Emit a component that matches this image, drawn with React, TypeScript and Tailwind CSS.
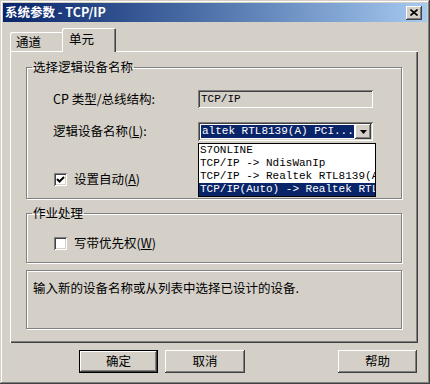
import React from "react";

const raised =
  "shadow-[inset_-1px_-1px_#404040,inset_1px_1px_#ffffff,inset_-2px_-2px_#808080,inset_2px_2px_#d4d0c8]";
const sunken =
  "shadow-[inset_1px_1px_#808080,inset_-1px_-1px_#ffffff,inset_2px_2px_#404040,inset_-2px_-2px_#d4d0c8]";
const etched = "border border-[#808080] shadow-[1px_1px_0_#ffffff,inset_1px_1px_0_#ffffff]";
const mono = "font-['Liberation_Mono',monospace] text-[11px]";

function Checkbox({ checked }: { checked?: boolean }) {
  return (
    <div className={`h-[13px] w-[13px] bg-white ${sunken} flex items-center justify-center`}>
      {checked && (
        <svg width="9" height="9" viewBox="0 0 9 9">
          <polyline points="1,4 3.5,6.5 8,2" fill="none" stroke="#000" strokeWidth="2" />
        </svg>
      )}
    </div>
  );
}

function Button({ label, primary }: { label: string; primary?: boolean }) {
  return (
    <div
      className={`flex h-[23px] items-center justify-center text-[12.5px] ${
        primary ? "border border-black" : ""
      } ${raised}`}
    >
      {label}
    </div>
  );
}

const items = [
  "S7ONLINE",
  "TCP/IP -> NdisWanIp",
  "TCP/IP -> Realtek RTL8139(A) PCI Fast Ethernet",
  "TCP/IP(Auto) -> Realtek RTL8139(A) PCI Fast Ethernet",
];

export default function App() {
  return (
    <div
      className={`h-[384px] w-[430px] bg-[#d4d0c8] p-[3px] text-black font-['Noto_Sans_CJK_SC',sans-serif] shadow-[inset_-1px_-1px_#404040,inset_1px_1px_#d4d0c8,inset_-2px_-2px_#808080,inset_2px_2px_#ffffff]`}
    >
      {/* title bar */}
      <div className="flex h-[19px] items-center bg-gradient-to-r from-[#0a246a] to-[#a6caf0] pl-[2px]">
        <span className="text-[12.5px] font-bold leading-none text-white">系统参数 - TCP/IP</span>
        <div className={`ml-auto mr-[5px] flex h-[14px] w-[16px] items-center justify-center bg-[#d4d0c8] ${raised}`}>
          <svg width="8" height="7" viewBox="0 0 8 7">
            <path d="M0.5 0.5 L7.5 6.5 M7.5 0.5 L0.5 6.5" stroke="#000" strokeWidth="1.6" />
          </svg>
        </div>
      </div>

      {/* tabs */}
      <div className="flex h-[29px] items-end pl-[7px]">
        <div className="flex h-[19px] w-[52px] items-center rounded-tl-[2px] pl-[6px] pt-[1px] text-[12.5px] shadow-[inset_1px_1px_#ffffff]">
          通道
        </div>
        <div className="relative z-10 -mb-[1px] flex h-[24px] w-[54px] items-center rounded-t-[2px] bg-[#d4d0c8] pb-[2px] pl-[7px] text-[12.5px] shadow-[inset_1px_1px_#ffffff,inset_-1px_0_#404040,inset_-2px_0_#808080]">
          单元
        </div>
      </div>

      {/* panel */}
      <div className="ml-[7px] h-[292px] w-[408px] px-[16px] pt-[8px] shadow-[inset_1px_1px_#ffffff,inset_-1px_-1px_#404040,inset_-2px_-2px_#808080]">
        <fieldset className={`h-[140px] ${etched}`}>
          <legend className="ml-[5px] px-[1px] text-[12.5px] leading-[16px]">选择逻辑设备名称</legend>
          <div className="mt-[15px] flex h-[18px] items-center pl-[26px] text-[12.5px]">
            <span className="w-[145px]">CP 类型/总线结构:</span>
            <div className={`flex h-[18px] w-[175px] items-center pl-[3px] ${sunken} ${mono}`}>TCP/IP</div>
          </div>
          <div className="mt-[14px] flex h-[19px] items-center pl-[26px] text-[12.5px]">
            <span className="w-[145px]">
              逻辑设备名称(<u>L</u>):
            </span>
            <div className="relative">
              <div className={`flex h-[19px] w-[175px] bg-white p-[2px] ${sunken}`}>
                <div className={`m-[1px] flex flex-1 items-center overflow-hidden whitespace-nowrap bg-[#0a246a] pl-[1px] text-white ${mono}`}>
                  altek RTL8139(A) PCI...
                </div>
                <div className={`flex w-[16px] items-center justify-center bg-[#d4d0c8] ${raised}`}>
                  <svg width="7" height="4" viewBox="0 0 7 4">
                    <polygon points="0,0 7,0 3.5,4" fill="#000" />
                  </svg>
                </div>
              </div>
              <div className="absolute left-0 top-[21px] w-[178px] border border-black bg-white">
                {items.map((t, i) => (
                  <div
                    key={t}
                    className={`h-[13px] overflow-hidden whitespace-nowrap pl-[1px] leading-[13px] ${mono} ${
                      i === items.length - 1 ? "bg-[#0a246a] text-white" : ""
                    }`}
                  >
                    {t}
                  </div>
                ))}
              </div>
            </div>
          </div>
          <div className="mt-[32px] flex h-[13px] items-center pl-[27px] text-[12.5px]">
            <Checkbox checked />
            <span className="ml-[7px]">
              设置自动(<u>A</u>)
            </span>
          </div>
        </fieldset>

        <fieldset className={`mt-[6px] h-[58px] ${etched}`}>
          <legend className="ml-[5px] px-[1px] text-[12.5px] leading-[16px]">作业处理</legend>
          <div className="mt-[16px] flex h-[13px] items-center pl-[27px] text-[12.5px]">
            <Checkbox />
            <span className="ml-[7px]">
              写带优先权(<u>W</u>)
            </span>
          </div>
        </fieldset>

        <div className={`mt-[7px] h-[59px] pl-[6px] pt-[9px] text-[12.5px] leading-[16px] ${etched}`}>
          输入新的设备名称或从列表中选择已设计的设备.
        </div>
      </div>

      {/* buttons */}
      <div className="mt-[7px] flex">
        <div className="ml-[76px] w-[79px]">
          <Button label="确定" primary />
        </div>
        <div className="ml-[7px] w-[80px]">
          <Button label="取消" />
        </div>
        <div className="ml-auto mr-[10px] w-[79px]">
          <Button label="帮助" />
        </div>
      </div>
    </div>
  );
}
